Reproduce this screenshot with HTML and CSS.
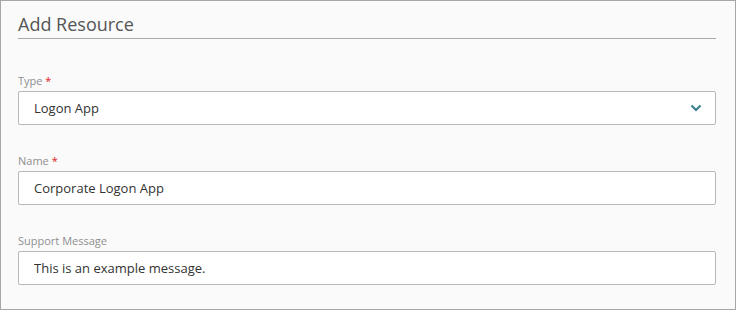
FILE: index.html
```html
<!DOCTYPE html>
<html>
<head>
<meta charset="utf-8">
<link rel="stylesheet" href="styles.css">
</head>
<body>
<div class="panel">
  <h1 class="title">Add Resource</h1>
  <div class="field">
    <label class="label">Type <span class="req">*</span></label>
    <div class="input select">
      <span>Logon App</span>
      <svg class="chev" width="12" height="8" viewBox="0 0 12 8"><path d="M1.5 1.5 L6 6 L10.5 1.5" fill="none" stroke="#3c7f8d" stroke-width="2.2"/></svg>
    </div>
  </div>
  <div class="field">
    <label class="label">Name <span class="req">*</span></label>
    <div class="input"><span>Corporate Logon App</span></div>
  </div>
  <div class="field">
    <label class="label">Support Message</label>
    <div class="input"><span>This is an example message.</span></div>
  </div>
</div>
</body>
</html>
```
FILE: styles.css
```css
html, body { margin: 0; padding: 0; background: #ffffff; }
body { font-family: "Open Sans", "Liberation Sans", sans-serif; }
.panel {
  box-sizing: border-box;
  width: 736px;
  height: 310px;
  border: 1px solid #a6a6a6;
  background: #fafafa;
  padding: 11px 19px 0 17px;
}
.title {
  margin: 0;
  font-size: 18px;
  font-weight: 400;
  color: #555555;
  line-height: 25px;
  padding-bottom: 1px;
  border-bottom: 1px solid #a9a9a9;
}
.field { display: flex; flex-direction: column; }
.field + .field { margin-top: 28px; }
.title + .field { margin-top: 34px; }
.label {
  font-size: 11px;
  line-height: 15px;
  color: #8f8f8f;
  margin-bottom: 3px;
}
.req { color: #e02020; }
.input {
  box-sizing: border-box;
  height: 34px;
  background: #ffffff;
  border: 1px solid #b8b8b8;
  border-radius: 2px;
  padding: 0 15px;
  display: flex;
  align-items: center;
  justify-content: space-between;
  font-size: 13px;
  color: #333333;
}
.chev { margin-right: -2px; }
```
